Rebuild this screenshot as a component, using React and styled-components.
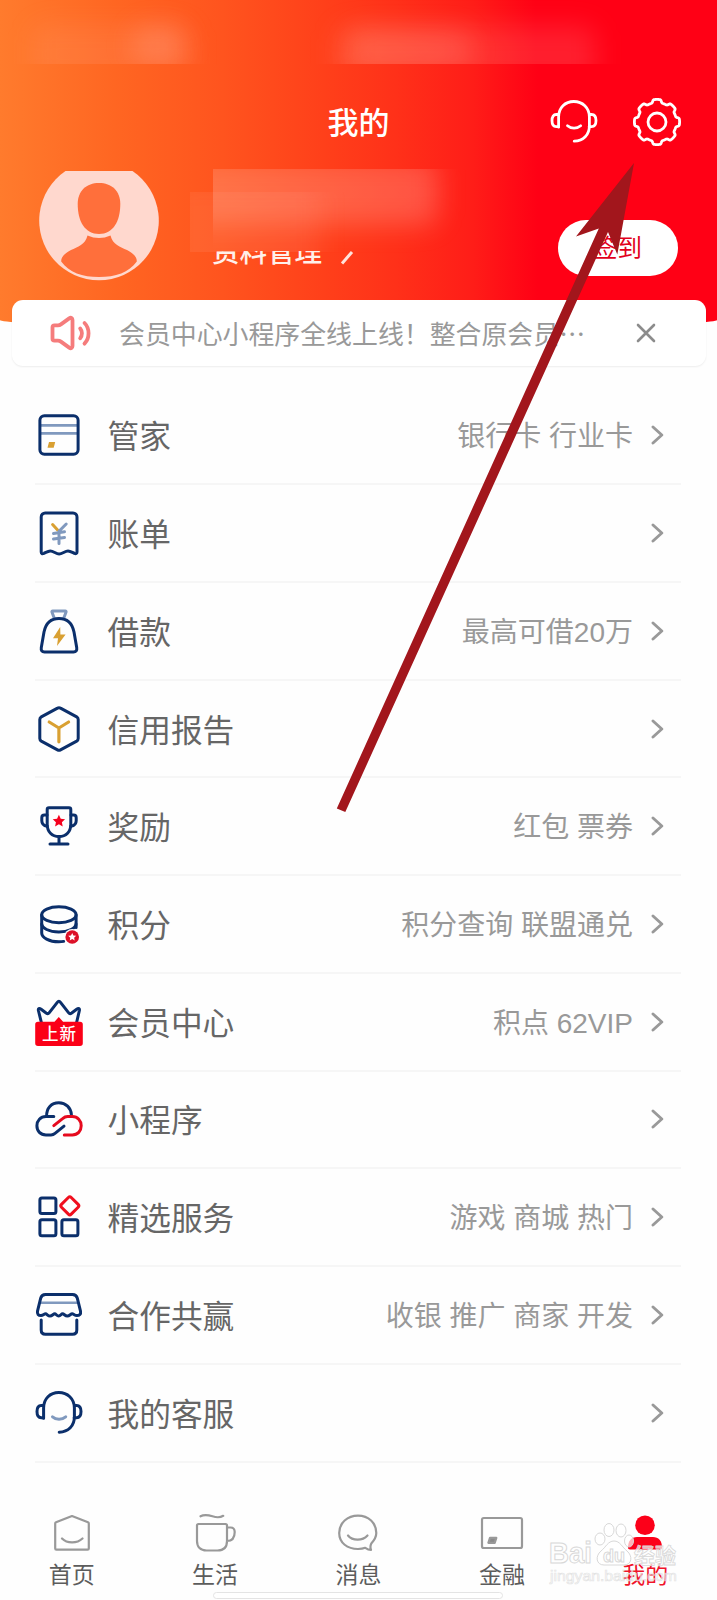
import React from "react";
import styled, { createGlobalStyle } from "styled-components";

const NAVY = "#0b2f6b";
const STEEL = "#8099be";
const GOLD = "#d9a032";
const RED = "#f5001d";

const GlobalStyle = createGlobalStyle`
  * {
    box-sizing: border-box;
  }
  body {
    margin: 0;
    background: #fefefe;
    font-family: "Noto Sans CJK SC", "Noto Sans", sans-serif;
  }
`;

const starPoints = (cx, cy, r) => {
	const points = [];
	for (let i = 0; i < 10; i++) {
		const radius = i % 2 ? r * 0.48 : r;
		const angle = (Math.PI / 5) * i - Math.PI / 2;
		points.push(`${(cx + radius * Math.cos(angle)).toFixed(2)},${(cy + radius * Math.sin(angle)).toFixed(2)}`);
	}
	return points.join(" ");
};

const gearPoints = () => {
	const points = [];
	for (let i = 0; i < 240; i++) {
		const angle = (Math.PI / 120) * i;
		const radius = 21 + 1.6 * Math.tanh(3.2 * (Math.cos(8 * angle) + 0.1));
		points.push(`${(24 + radius * Math.cos(angle)).toFixed(2)},${(24 + radius * Math.sin(angle)).toFixed(2)}`);
	}
	return points.join(" ");
};

const Headset = ({ smile = STEEL }) => (
	<>
		<path d="M8.6 29.2V19C8.6 9.6 15.2 3.5 23.8 3.5S39.4 9.6 39.4 19v8.5c0 9.5-6 15.4-15.2 15.7" />
		<path d="M8.6 16.500H6.200C3.600 16.500 2 18.800 2 22.600s1.600 6.100 4.200 6.100h2.400M39.400 16.500h2.200c2.800 0 4.400 2.300 4.400 6.100s-1.600 6.100-4.400 6.100h-2.400" />
		<path d="M17.500 27.800c3.600 3.200 9.400 3.200 13.200 0" stroke={smile} />
	</>
);

const icons = {
	card: (
		<>
			<path d="M6 14.400h36M6 22.400h36" stroke={STEEL} strokeWidth="2.600" />
			<rect x="4.900" y="4.800" width="38.200" height="38.500" rx="4.500" />
			<path d="M14 31h6.200l-1.500 5.700h-6.200z" fill={GOLD} stroke="none" />
		</>
	),
	bill: (
		<>
			<path d="M6.200 43V8a4 4 0 0 1 4-4H38a4 4 0 0 1 4 4v35c0 1.600-1 2-2.600 1.300C37 43.200 35 42 33 42c-3 0-5.800 3-8.900 3S18.500 42 15.300 42c-2 0-4 1.200-6.400 2.300C7.200 45 6.200 44.600 6.200 43z" />
			<path d="M17.600 15.600l5 5.400" stroke={GOLD} />
			<path d="M31.200 15L24 22.200V34.500M18.500 24.500l11-1.700M18.500 30l11-1.500" stroke={STEEL} />
		</>
	),
	loan: (
		<>
			<path d="M19 10.500l-2-5.200c-.3-.8 0-1.200.8-1.200h12.400c.8 0 1.100.4.8 1.200l-2 5.200" stroke={STEEL} />
			<path d="M24 11.500C15.500 11.500 10.700 16.800 9 25L6.300 40.500C5.800 43.600 7 44.900 9.500 44.900h29c2.500 0 3.700-1.300 3.200-4.400L39 25c-1.700-8.200-6.500-13.500-15-13.500z" />
			<path d="M25.200 20L18 31.200h5L22 39l8.600-11.500h-5.200z" fill={GOLD} stroke="none" />
		</>
	),
	report: (
		<>
			<path d="M22.500 3.100a3 3 0 0 1 3 0l16.200 8.800a3 3 0 0 1 1.500 2.600v19a3 3 0 0 1-1.500 2.600l-16.200 8.800a3 3 0 0 1-3 0L6.300 36.100a3 3 0 0 1-1.500-2.600v-19a3 3 0 0 1 1.500-2.600z" />
			<path d="M14.200 17l9.700 6 9.700-6M23.900 23v13.800" stroke={GOLD} strokeWidth="3.200" />
		</>
	),
	award: (
		<>
			<path d="M14 5.800h20a1.800 1.800 0 0 1 1.800 1.800v14.600c0 7.600-4.800 12.400-11.800 12.400s-11.800-4.800-11.800-12.400V7.600A1.800 1.800 0 0 1 14 5.800z" />
			<path d="M12 13H9.500c-1.800 0-2.700 1-2.700 2.700v3c0 3.200 2 5 5.400 5.600M36 13h2.500c1.800 0 2.700 1 2.700 2.700v3c0 3.200-2 5-5.400 5.600M24 35v7M15 42h18" />
			<polygon points={starPoints(23.9, 19.2, 6.5)} fill={RED} stroke="none" />
		</>
	),
	points: (
		<>
			<ellipse cx="23.900" cy="14.700" rx="17.200" ry="8" />
			<path d="M6.700 15v8.500c0 4.800 7.300 8.400 17.200 8.400 9 0 17.200-3.400 17.200-8.400V15" />
			<path d="M6.700 24v9c0 4.600 7.300 8.800 17.200 8.800 1.600 0 3.300-.1 4.800-.4M41.100 24v3.500" />
			<circle cx="37.200" cy="37" r="8" fill="#fff" stroke="none" />
			<circle cx="37.200" cy="37" r="6.800" fill="#dc1128" stroke="none" />
			<polygon points={starPoints(37.2, 37.1, 4.2)} fill="#fff" stroke="none" />
		</>
	),
	member: (
		<>
			<path d="M7 27L3.400 12.500c-.4-1.900.9-2.700 2.400-1.500l5.300 4c1.300.9 2.300.8 3.200-.4l8-10.300c1-1.300 2.200-1.300 3.200 0l8 10.300c.9 1.200 1.900 1.300 3.200.4l5.300-4c1.500-1.200 2.800-.4 2.400 1.500L41 27" />
			<path d="M3 23.700h16.500l4.300-4.600 4.300 4.600H45a2.800 2.800 0 0 1 2.800 2.800v18.700A2.800 2.800 0 0 1 45 48H3a2.800 2.800 0 0 1-2.800-2.800V26.500A2.800 2.800 0 0 1 3 23.700z" fill="#fb0017" stroke="none" />
			<text x="24.400" y="42" textAnchor="middle" fontSize="16.500" letterSpacing="1" fontWeight="500" fill="#fff" stroke="none">上新</text>
		</>
	),
	mini: (
		<>
			<path d="M11.600 21.500C11.200 13 16.500 7.700 23.800 7.700c7 0 12.200 5 12.600 12" />
			<path d="M18.800 21.600H11C5.500 21.600 1.900 25.500 1.900 30.800S5.500 39.900 11 39.900h5c1.700 0 2.700-.4 4-1.500l9-7.200" />
			<path d="M18.800 30.600l8.800-7c1.800-1.500 3-2 5-2h4.700c5.300 0 8.900 3.900 8.900 9.200s-3.600 9.100-8.900 9.100H29.300" stroke="#e60a1e" />
		</>
	),
	services: (
		<>
			<rect x="4.900" y="5" width="16" height="15.600" rx="2" />
			<rect x="4.900" y="26.800" width="16" height="16" rx="2" />
			<rect x="26.900" y="26.800" width="16" height="16" rx="2" />
			<rect x="27.900" y="5.900" width="13.800" height="13.800" rx="2" transform="rotate(45 34.800 12.800)" stroke="#f00f1e" />
		</>
	),
	shop: (
		<>
			<path d="M6 11.700h36" stroke={STEEL} strokeWidth="2.500" />
			<path d="M10.500 3.500h27c2.700 0 4.200 1.200 4.800 3.700l3.200 13c.6 2.800-1 4.400-3.600 4.400-2.300 0-3.400-1.800-4.700-1.800-1.600 0-2.500 2.300-4.900 2.300-2.200 0-3.300-2.300-4.700-2.300-1.400 0-2 2.300-3.900 2.300s-2.700-2.300-4-2.300c-1.400 0-2.500 2.300-4.700 2.300-2.200 0-3-2.300-4.500-2.300-1.300 0-2.400 1.800-4.500 1.800-2.600 0-4-1.600-3.500-4.400l3.200-13c.6-2.500 2.100-3.700 4.800-3.700z" />
			<path d="M6.200 29v10c0 2.900 1.300 4.300 4.200 4.300h27.200c2.900 0 4.200-1.400 4.200-4.300V29" />
		</>
	),
	service: <Headset />
};

const menu = [
	{ icon: "card", title: "管家", hint: "银行卡 行业卡" },
	{ icon: "bill", title: "账单" },
	{ icon: "loan", title: "借款", hint: "最高可借20万" },
	{ icon: "report", title: "信用报告" },
	{ icon: "award", title: "奖励", hint: "红包 票券" },
	{ icon: "points", title: "积分", hint: "积分查询 联盟通兑" },
	{ icon: "member", title: "会员中心", hint: "积点 62VIP" },
	{ icon: "mini", title: "小程序" },
	{ icon: "services", title: "精选服务", hint: "游戏 商城 热门" },
	{ icon: "shop", title: "合作共赢", hint: "收银 推广 商家 开发" },
	{ icon: "service", title: "我的客服" }
];

const tabs = [
	{
		title: "首页",
		icon: <path d="M6 9.300L22 3l16 6.300c.5.200.8.600.8 1.200v25c0 .7-.5 1.200-1.200 1.200H6.400c-.7 0-1.200-.5-1.200-1.200v-25c0-.6.300-1 .8-1.200zM12 25.500c5 5.200 15 5.200 20.500 0" />
	},
	{
		title: "生活",
		icon: <path d="M5.500 11h27c1 0 1.500.5 1.500 1.500V28c0 6-3.500 9.500-9.500 9.500h-11C7.500 37.500 4 34 4 28V12.500c0-1 .5-1.500 1.500-1.500zM34 14.500h3.500c3 0 4.200 1.500 4.200 4.500 0 6-2.200 9-7.700 9M7.500 3.300c4-2.300 8-1.300 12 0s7.500 1.500 10.700-.5" />
	},
	{
		title: "消息",
		icon: <path d="M35.300 30.500C38.500 27 40.300 23.500 40.300 20 40.300 10 32.500 2.600 22 2.600S3.200 10 3.200 20 11.500 36 22 36c2.500 0 5-.3 7.300-1.200 1.800 1.300 3.600 2.100 5.700 2.100-.8-2.200-.7-4.400.3-6.400zM12 22.500c4.500 5.600 14.500 5.600 19.500 0" />
	},
	{
		title: "金融",
		icon: (
			<>
				<rect x="2" y="5" width="40" height="30" rx="1.800" />
				<path d="M10 24.800h6.300l-1.600 5H8.400z" fill="#8a8a8a" />
			</>
		)
	},
	{
		title: "我的",
		active: true,
		icon: (
			<>
				<circle cx="22" cy="12.200" r="9.800" fill="#fc0019" stroke="none" />
				<path d="M14 24h16c5.500 0 9 4 9 10.500 0 1.300-.6 2-2 2H7c-1.400 0-2-.7-2-2C5 28 8.500 24 14 24z" fill="#fc0019" stroke="none" />
			</>
		)
	}
];

/* patches over private data: each frame cuts a few blurred blobs */
const smears = [
	{ left: 8, top: 0, width: 240, height: 64, blobs: [[24, 24, 160, 60, 0.11], [125, 26, 50, 40, 0.2]] },
	{ left: 310, top: 0, width: 320, height: 64, blobs: [[26, 26, 260, 60, 0.15], [40, 30, 120, 40, 0.15]] },
	{ left: 213, top: 169, width: 280, height: 84, blobs: [[-30, -10, 255, 66, 0.26]] },
	{ left: 190, top: 192, width: 190, height: 60, blobs: [[-20, -10, 150, 100, 0.1]] }
];

const App = () => (
	<Page>
		<GlobalStyle />
		<Header>
			<TitleBar>
				<span />
				<PageTitle>我的</PageTitle>
				<Actions>
					<LineIcon viewBox="0 0 48 48" color="#fff">
						<Headset smile="#fff" />
					</LineIcon>
					<LineIcon viewBox="0 0 48 48" color="#fff">
						<polygon points={gearPoints()} />
						<circle cx="24" cy="24" r="9" />
					</LineIcon>
				</Actions>
			</TitleBar>
			<Profile>
				<Avatar viewBox="0 0 120 110">
					<path d="M26.500 0h67A59.800 59.800 0 1 1 26.500 0z" fill="#ffd8ce" />
					<path d="M60 12c12.500 0 21.300 7.800 21.300 21 0 17.500-7.300 30-21.300 30S38.700 50.500 38.700 33C38.700 19.800 47.500 12 60 12z" fill="#ff6f3b" />
					<path d="M48.500 64.500q11.500 5 23 0c2 9 10 11.500 16.500 14.500 7 3.500 10 7.500 9.800 11.500C90 101.500 76.500 106 60 106s-30-4.500-37.800-15.500C22 86.500 25 82.500 32 79c6.500-3 14.500-5.500 16.500-14.500z" fill="#ff6f3b" />
				</Avatar>
				<ProfileInfo>
					<ProfileLink>资料管理</ProfileLink>
					<Pencil viewBox="0 0 14 14">
						<path d="M2 12.500L12 1" />
					</Pencil>
				</ProfileInfo>
				<SignButton>签到</SignButton>
			</Profile>
			{smears.map(smear => (
				<SmearFrame key={smear.left} $box={smear}>
					{smear.blobs.map(blob => (
						<SmearBlob key={blob[0]} $blob={blob} />
					))}
				</SmearFrame>
			))}
		</Header>

		<Notice>
			<Speaker viewBox="0 0 46 40">
				<path d="M5.500 14.200c0-1.300.7-1.900 2-1.900h3.400c1.200 0 2-.2 3-.9l8.300-6c1.800-1.300 3.300-.6 3.300 1.500v26.200c0 2.100-1.500 2.800-3.300 1.500l-8.300-6c-1-.7-1.800-.9-3-.9H7.500c-1.300 0-2-.6-2-1.900z" />
				<path d="M33.200 15.500c2.300 2.700 2.300 7 0 9.800M37.500 10c5.400 5.400 5.400 15.200 0 20.700" />
			</Speaker>
			<NoticeText>会员中心小程序全线上线！整合原会员…</NoticeText>
			<Close viewBox="0 0 20 20">
				<path d="M2 2l16 16M18 2L2 18" />
			</Close>
		</Notice>

		<Menu>
			{menu.map(item => (
				<MenuItem key={item.title}>
					<LineIcon viewBox="0 0 48 48" color={NAVY} $bold>{icons[item.icon]}</LineIcon>
					<MenuTitle>{item.title}</MenuTitle>
					<MenuHint>{item.hint}</MenuHint>
					<Chevron viewBox="0 0 14 20">
						<path d="M2 2l8.800 8L2 18" />
					</Chevron>
				</MenuItem>
			))}
		</Menu>

		<TabBar>
			{tabs.map(tab => (
				<Tab key={tab.title} $active={tab.active}>
					<TabIcon viewBox="0 0 44 40">{tab.icon}</TabIcon>
					{tab.title}
				</Tab>
			))}
		</TabBar>
		<HomeIndicator />

		<Watermark viewBox="0 0 140 70">
			<g fill="#fff" fillOpacity="0.7" stroke="#d8d8d8" strokeWidth="1">
				<ellipse cx="53" cy="24" rx="5" ry="6" />
				<ellipse cx="62" cy="15" rx="5" ry="6.500" />
				<ellipse cx="74" cy="15.500" rx="5" ry="6.500" />
				<ellipse cx="82" cy="26" rx="4.500" ry="6" />
				<path d="M67 26c6 0 8 6 13 10 6 5 5 14-3 14H57c-8 0-9-9-3-14 5-4 7-10 13-10z" />
				<text x="2" y="48" fontSize="29" fontWeight="700" textLength="43" lengthAdjust="spacingAndGlyphs">Bai</text>
				<text x="56" y="47" fontSize="19" fontWeight="700" textLength="22" lengthAdjust="spacingAndGlyphs">du</text>
				<text x="87" y="48" fontSize="21" fontWeight="700" fontFamily="Noto Sans CJK SC" strokeWidth="0.800">经验</text>
			</g>
			<text x="3" y="66" fontSize="15" textLength="127" lengthAdjust="spacingAndGlyphs" fill="#fff" fillOpacity="0.5" stroke="#dcdcdc" strokeOpacity="0.800" strokeWidth="0.700">jingyan.baidu.com</text>
		</Watermark>

		<Pointer viewBox="0 0 717 1600">
			<path d="M634 163L617.300 254.500 608 232 345.300 812 336.800 808.500 598.800 228.500 576 236.500z" />
		</Pointer>
	</Page>
);

const Page = styled.div`
  position: relative;
  display: flex;
  flex-direction: column;
  width: 717px;
  height: 1600px;
  overflow: hidden;
  background: #fefefe;
`;

const Header = styled.header`
  position: relative;
  height: 328px;
  flex: none;
  padding-top: 90px;
  border-radius: 0 0 50% 50% / 0 0 8px 8px;
  background: linear-gradient(90deg, #ff7b2d 0%, #ff6622 16%, #ff541e 31%, #ff401a 45%, #ff3119 55%, #ff1d18 66%, #ff0015 75%);
`;

const SmearFrame = styled.div`
  position: absolute;
  left: ${props => props.$box.left}px;
  top: ${props => props.$box.top}px;
  width: ${props => props.$box.width}px;
  height: ${props => props.$box.height}px;
  overflow: hidden;
`;

const SmearBlob = styled.div`
  position: absolute;
  left: ${props => props.$blob[0]}px;
  top: ${props => props.$blob[1]}px;
  width: ${props => props.$blob[2]}px;
  height: ${props => props.$blob[3]}px;
  border-radius: 14px;
  background: rgba(255, 200, 190, ${props => props.$blob[4]});
  filter: blur(13px);
`;

const TitleBar = styled.div`
  display: grid;
  grid-template-columns: 1fr auto 1fr;
  align-items: center;
  height: 64px;
  padding-right: 36px;
  padding-left: 36px;
`;

const PageTitle = styled.h1`
  margin: 0;
  padding-bottom: 2px;
  color: #fff;
  font-size: 31px;
  font-weight: 500;
  line-height: 62px;
`;

const Actions = styled.div`
  display: flex;
  justify-content: flex-end;
  gap: 35px;
`;

const LineIcon = styled.svg`
  flex: none;
  width: 48px;
  height: 48px;
  fill: none;
  stroke: ${props => props.color};
  stroke-width: ${props => props.$bold ? 3 : 2.8};
  stroke-linecap: round;
  stroke-linejoin: round;
`;

const Profile = styled.div`
  display: flex;
  align-items: flex-start;
  padding: 17px 39.500px 0 39px;
`;

const Avatar = styled.svg`
  width: 120px;
  height: 110px;
`;

const ProfileInfo = styled.div`
  display: flex;
  flex: 1;
  align-items: flex-start;
  gap: 18px;
  padding: 80px 0 0 53px;
`;

const ProfileLink = styled.div`
  display: flex;
  align-items: flex-end;
  height: 17px;
  overflow: hidden;
  color: #fff0ea;
  font-size: 27.500px;
  font-weight: 500;
  line-height: 35px;
`;

const Pencil = styled.svg`
  width: 14px;
  height: 14px;
  fill: none;
  stroke: #ffe3dc;
  stroke-width: 3;
`;

const SignButton = styled.button`
  width: 120px;
  height: 56px;
  margin-top: 49.300px;
  padding: 0 0 4px;
  border: 0;
  border-radius: 28px;
  background: #fff;
  color: #e2001c;
  font-family: inherit;
  font-size: 24.500px;
`;

const Notice = styled.div`
  position: relative;
  display: flex;
  flex: none;
  align-items: center;
  width: 694px;
  height: 66px;
  margin: -28px 0 0 11.500px;
  padding: 0 50px 0 35.500px;
  border-radius: 11px;
  background: #fff;
  box-shadow: 0 1px 2px rgba(0, 0, 0, 0.07);
`;

const Speaker = styled.svg`
  width: 46px;
  height: 40px;
  fill: none;
  stroke: #f57c7c;
  stroke-width: 3.8;
  stroke-linecap: round;
`;

const NoticeText = styled.div`
  flex: 1;
  margin-left: 26px;
  color: #999;
  font-size: 25.900px;
  line-height: 36px;
  white-space: nowrap;
`;

const Close = styled.svg`
  width: 20px;
  height: 20px;
  fill: none;
  stroke: #8c8c8c;
  stroke-width: 2.6;
  stroke-linecap: round;
`;

const Menu = styled.div`
  flex: none;
  margin: 21.600px 36px 0 35px;
`;

const MenuItem = styled.div`
  display: flex;
  align-items: center;
  height: 97.730px;
  border-bottom: 2px solid #f6f6f6;
`;

const MenuTitle = styled.div`
  margin-left: 24.500px;
  padding-bottom: 2px;
  color: #666;
  font-size: 31.700px;
  line-height: 46px;
`;

const MenuHint = styled.div`
  flex: 1;
  margin-right: 18px;
  padding-top: 4px;
  color: #999;
  font-family: "Liberation Sans", "Noto Sans CJK SC", sans-serif;
  font-size: 28px;
  line-height: 40px;
  text-align: right;
  white-space: nowrap;
`;

const Chevron = styled.svg`
  width: 14px;
  height: 20px;
  margin-right: 16px;
  fill: none;
  stroke: #999;
  stroke-width: 2.9;
  stroke-linecap: round;
  stroke-linejoin: round;
`;

const TabBar = styled.nav`
  display: grid;
  grid-template-columns: repeat(5, 1fr);
  flex: none;
  margin-top: 50.400px;
`;

const Tab = styled.div`
  display: flex;
  flex-direction: column;
  align-items: center;
  color: ${props => props.$active ? "#f0142a" : "#5c5c5c"};
  font-size: 23px;
  line-height: 34px;
  gap: 3px;
`;

const TabIcon = styled.svg`
  width: 44px;
  height: 40px;
  fill: none;
  stroke: #999;
  stroke-width: 2.2;
  stroke-linecap: round;
  stroke-linejoin: round;
`;

const HomeIndicator = styled.div`
  position: absolute;
  bottom: 1px;
  left: 213px;
  width: 290px;
  height: 7px;
  border: 1px solid #e4e4e4;
  border-radius: 4px;
  background: #fff;
`;

const Watermark = styled.svg`
  position: absolute;
  left: 547px;
  top: 1515px;
  width: 140px;
  height: 70px;
  font-family: "Liberation Sans", sans-serif;
`;

const Pointer = styled.svg`
  position: absolute;
  top: 0;
  left: 0;
  width: 717px;
  height: 1600px;
  fill: #a2161c;
  pointer-events: none;
`;

export default App;
